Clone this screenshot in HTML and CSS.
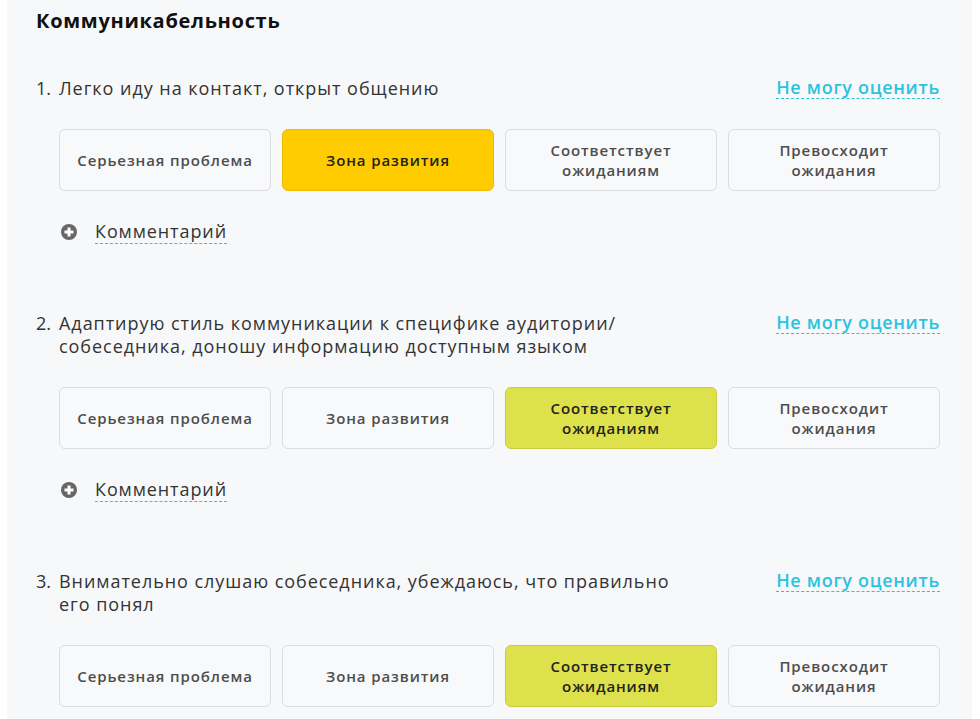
FILE: index.html
```html
<!DOCTYPE html>
<html lang="ru">
<head>
    <meta charset="UTF-8">
    <title>Коммуникабельность</title>
    <link rel="stylesheet" href="styles.css">
</head>
<body>
    <div class="panel">
        <h2 class="section-title">Коммуникабельность</h2>

        <div class="question">
            <div class="question-head">
                <span class="num">1.</span>
                <span class="question-text">Легко иду на контакт, открыт общению</span>
                <a class="skip" href="#">Не могу оценить</a>
            </div>
            <div class="options">
                <button class="option">Серьезная проблема</button>
                <button class="option selected-dev">Зона развития</button>
                <button class="option">Соответствует<br>ожиданиям</button>
                <button class="option">Превосходит<br>ожидания</button>
            </div>
            <div class="comment">
                <span class="plus"></span>
                <a class="comment-link" href="#">Комментарий</a>
            </div>
        </div>

        <div class="question">
            <div class="question-head">
                <span class="num">2.</span>
                <span class="question-text">Адаптирую стиль коммуникации к специфике аудитории/ собеседника, доношу информацию доступным языком</span>
                <a class="skip" href="#">Не могу оценить</a>
            </div>
            <div class="options">
                <button class="option">Серьезная проблема</button>
                <button class="option">Зона развития</button>
                <button class="option selected-ok">Соответствует<br>ожиданиям</button>
                <button class="option">Превосходит<br>ожидания</button>
            </div>
            <div class="comment">
                <span class="plus"></span>
                <a class="comment-link" href="#">Комментарий</a>
            </div>
        </div>

        <div class="question">
            <div class="question-head">
                <span class="num">3.</span>
                <span class="question-text">Внимательно слушаю собеседника, убеждаюсь, что правильно его понял</span>
                <a class="skip" href="#">Не могу оценить</a>
            </div>
            <div class="options">
                <button class="option">Серьезная проблема</button>
                <button class="option">Зона развития</button>
                <button class="option selected-ok">Соответствует<br>ожиданиям</button>
                <button class="option">Превосходит<br>ожидания</button>
            </div>
            <div class="comment">
                <span class="plus"></span>
                <a class="comment-link" href="#">Комментарий</a>
            </div>
        </div>
    </div>
</body>
</html>
```

FILE: styles.css
```css
body {
    margin: 0;
    background-color: white;
    font-family: "Open Sans", Arial, sans-serif;
    color: #333;
}
.panel {
    margin-left: 7px;
    width: 965px;
    min-height: 719px;
    padding: 9px 32px 0 29px;
    box-sizing: border-box;
    background-color: #f7f8fa;
}
.section-title {
    margin: 0 0 44px 0;
    font-size: 20px;
    line-height: 24px;
    font-weight: 700;
    letter-spacing: 0.7px;
    color: #111;
}
.question {
    margin-bottom: 68px;
}
.question-head {
    display: flex;
    align-items: flex-start;
    font-size: 18px;
    line-height: 23px;
    letter-spacing: 0.95px;
}
.num {
    width: 23px;
    flex-shrink: 0;
    letter-spacing: 0;
}
.question-text {
    width: 640px;
}
.skip {
    margin-left: auto;
    color: #2ac3df;
    font-weight: 600;
    letter-spacing: 0.7px;
    text-decoration: none;
    border-bottom: 1px dashed #2ac3df;
    line-height: 21px;
}
.options {
    display: grid;
    grid-template-columns: repeat(4, 1fr);
    gap: 11px;
    margin: 29px 0 0 23px;
}
.option {
    height: 62px;
    border: 1px solid #dcdcdc;
    border-radius: 6px;
    background-color: #f8f9fb;
    font-family: inherit;
    font-size: 15px;
    line-height: 20px;
    font-weight: 600;
    letter-spacing: 0.9px;
    color: #4d4d4d;
    padding: 0 8px;
}
.selected-dev {
    background-color: #ffcc00;
    border-color: #ecbd00;
    color: #222;
}
.selected-ok {
    background-color: #dde14b;
    border-color: #c9cd3f;
    color: #222;
}
.comment {
    display: flex;
    align-items: center;
    margin: 28px 0 0 25px;
    font-size: 18px;
    line-height: 24px;
}
.plus {
    position: relative;
    width: 16px;
    height: 16px;
    border-radius: 50%;
    background-color: #666;
    margin-right: 18px;
}
.plus::before,
.plus::after {
    content: "";
    position: absolute;
    background-color: white;
    left: 50%;
    top: 50%;
    transform: translate(-50%, -50%);
}
.plus::before {
    width: 9px;
    height: 3px;
}
.plus::after {
    width: 3px;
    height: 9px;
}
.comment-link {
    color: #333;
    text-decoration: none;
    border-bottom: 1px dashed #999;
    letter-spacing: 0.9px;
}
```
